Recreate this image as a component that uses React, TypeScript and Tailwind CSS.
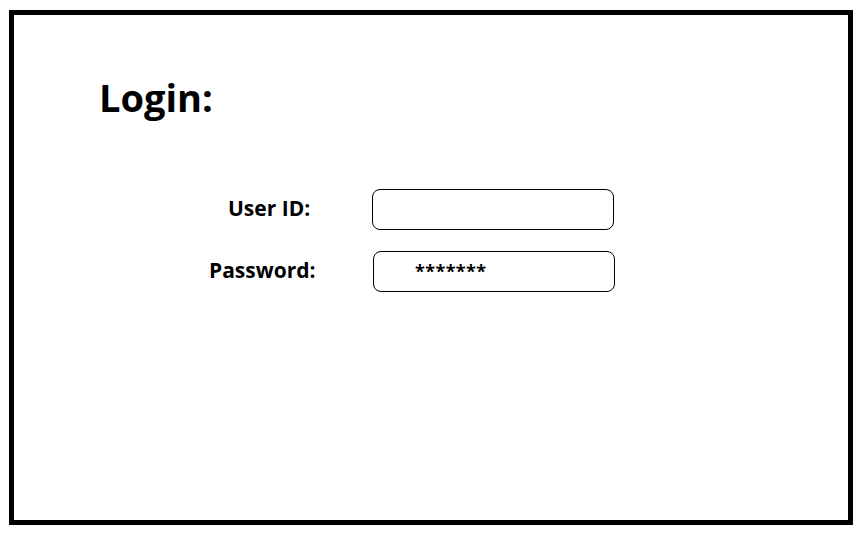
const App = () => {
  return (
    <div className="w-[860px] h-[533px] bg-white overflow-hidden font-['Open_Sans',sans-serif] text-black">
      <div className="ml-[9px] mt-[10px] w-[844px] h-[515px] border-[5px] border-black">
        {/* Title */}
        <h1 className="ml-[85px] mt-[60px] text-[38px] leading-[44px] font-bold">Login:</h1>

        {/* Form */}
        <div className="mt-[70px] flex flex-col gap-[21px]">
          <div className="flex items-center">
            <label className="ml-[214px] w-[144px] -mt-[3px] text-[21px] leading-[28px] font-bold">User ID:</label>
            <input
              type="text"
              className="w-[242px] h-[41px] rounded-[8px] border border-black outline-none px-3"
            />
          </div>
          <div className="flex items-center">
            <label className="ml-[195px] w-[164px] -mt-[3px] text-[21px] leading-[28px] font-bold">Password:</label>
            <div className="w-[242px] h-[41px] rounded-[8px] border border-black flex items-center pl-[41px] text-[18px] font-bold tracking-[0.4px]">
              *******
            </div>
          </div>
        </div>
      </div>
    </div>
  );
};

export default App;
